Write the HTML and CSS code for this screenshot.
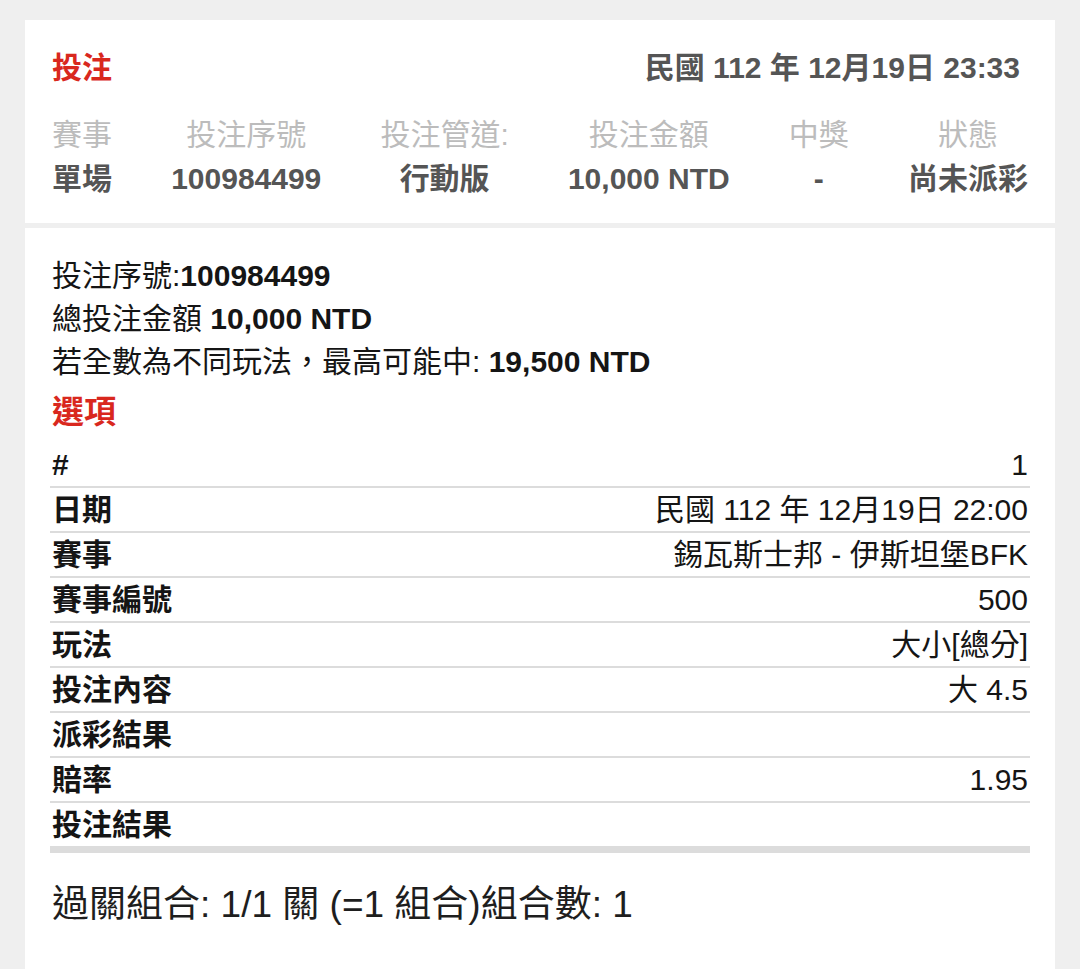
FILE: index.html
```html
<!DOCTYPE html>
<html lang="zh-Hant">
<head>
  <meta charset="UTF-8" />
  <meta name="viewport" content="width=device-width, initial-scale=1.0" />
  <title>投注紀錄</title>
  <link rel="stylesheet" href="styles.css">
</head>
<body>
  <div class="page">
    <section class="card bet-summary">
      <div class="summary-head">
        <h1>投注</h1>
        <span class="bet-time">民國 112 年 12月19日 23:33</span>
      </div>
      <div class="summary-cols">
        <div class="col"><span class="label">賽事</span><span class="value">單場</span></div>
        <div class="col"><span class="label">投注序號</span><span class="value">100984499</span></div>
        <div class="col"><span class="label">投注管道:</span><span class="value">行動版</span></div>
        <div class="col"><span class="label">投注金額</span><span class="value">10,000 NTD</span></div>
        <div class="col"><span class="label">中獎</span><span class="value">-</span></div>
        <div class="col"><span class="label">狀態</span><span class="value">尚未派彩</span></div>
      </div>
    </section>

    <section class="card bet-detail">
      <div class="info-lines">
        <p>投注序號:<b>100984499</b></p>
        <p>總投注金額 <b>10,000 NTD</b></p>
        <p>若全數為不同玩法，最高可能中: <b>19,500 NTD</b></p>
      </div>
      <h2>選項</h2>
      <table class="option-table">
        <tr><th>#</th><td>1</td></tr>
        <tr><th>日期</th><td>民國 112 年 12月19日 22:00</td></tr>
        <tr><th>賽事</th><td>錫瓦斯士邦 - 伊斯坦堡BFK</td></tr>
        <tr><th>賽事編號</th><td>500</td></tr>
        <tr><th>玩法</th><td>大小[總分]</td></tr>
        <tr><th>投注內容</th><td>大 4.5</td></tr>
        <tr><th>派彩結果</th><td></td></tr>
        <tr><th>賠率</th><td>1.95</td></tr>
        <tr class="last"><th>投注結果</th><td></td></tr>
      </table>
      <p class="combo">過關組合: 1/1 關 (=1 組合)組合數: 1</p>
    </section>
  </div>
</body>
</html>
```

FILE: styles.css
```css
html, body { margin: 0; padding: 0; }
body { font-family: 'Liberation Sans', 'Noto Sans CJK TC', sans-serif; background: #efefef; color: #151515; }
.page { padding: 20px 25px 0; display: flex; flex-direction: column; gap: 5px; }
.card { background: #fff; padding: 0 25px; }

.bet-summary { padding-top: 28px; padding-bottom: 22px; }
.summary-head { display: flex; justify-content: space-between; align-items: center; padding: 0 10px 0 2px; height: 40px; }
.summary-head h1 { margin: 0; font-size: 30px; font-weight: bold; color: #d9281e; line-height: 40px; }
.bet-time { font-size: 30px; font-weight: bold; color: #555; line-height: 40px; }
.summary-cols { display: flex; justify-content: space-between; margin-top: 25px; padding: 0 2px; }
.summary-cols .col { display: flex; flex-direction: column; align-items: center; }
.summary-cols .label { font-size: 30px; color: #bcbcbc; line-height: 44px; }
.summary-cols .value { font-size: 30px; font-weight: bold; color: #555; line-height: 44px; }

.bet-detail { padding-top: 26px; padding-bottom: 40px; min-height: 700px; }
.info-lines p { margin: 0; font-size: 30px; line-height: 43px; padding-left: 2px; }
.bet-detail h2 { margin: 7px 0 9px; padding-left: 2px; font-size: 32px; line-height: 44px; color: #d9281e; }
.option-table { width: 100%; border-collapse: collapse; }
.option-table tr { border-bottom: 2px solid #dcdcdc; }
.option-table tr.last { border-bottom: 7px solid #dcdcdc; }
.option-table th, .option-table td { font-size: 30px; height: 43px; padding: 0 2px; line-height: 43px; }
.option-table th { text-align: left; font-weight: bold; }
.option-table td { text-align: right; font-weight: normal; }
.combo { margin: 30px 0 0; padding-left: 2px; font-size: 37px; line-height: 44px; color: #1e1e1e; }
```
